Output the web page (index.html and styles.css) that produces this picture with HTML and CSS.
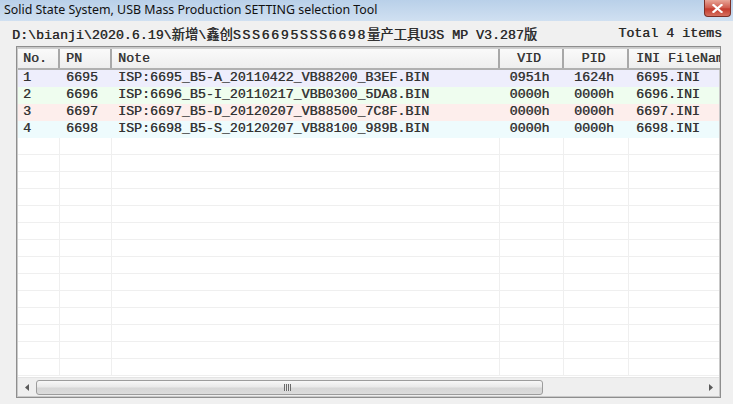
FILE: index.html
```html
<!DOCTYPE html>
<html>
<head>
<meta charset="utf-8">
<link rel="stylesheet" href="styles.css">
</head>
<body>
<div class="window">
  <div class="titlebar">
    <span class="title">Solid State System, USB Mass Production SETTING selection Tool</span>
    <div class="close"><svg width="11" height="9" viewBox="0 0 11 9"><path d="M1.5 1 L9.5 8 M9.5 1 L1.5 8" stroke="#fff" stroke-width="2.2" stroke-linecap="square"/></svg></div>
  </div>
  <div class="pathrow">
    <span class="path">D:\bianji\2020.6.19\新增\鑫创<span class="wide">SSS6695SSS6698</span>量产工具U3S MP V3.287版</span>
    <span class="total">Total 4 items</span>
  </div>
  <div class="listbox">
    <div class="header">
      <div class="hc">No.</div>
      <div class="hc">PN</div>
      <div class="hc">Note</div>
      <div class="hc center">VID</div>
      <div class="hc center">PID</div>
      <div class="hc ini">INI FileName</div>
    </div>
    <div class="rows">
      <div class="row r1"><div class="c">1</div><div class="c pn">6695</div><div class="c">ISP:6695_B5-A_20110422_VB88200_B3EF.BIN</div><div class="c center">0951h</div><div class="c center">1624h</div><div class="c ini">6695.INI</div></div>
      <div class="row r2"><div class="c">2</div><div class="c pn">6696</div><div class="c">ISP:6696_B5-I_20110217_VBB0300_5DA8.BIN</div><div class="c center">0000h</div><div class="c center">0000h</div><div class="c ini">6696.INI</div></div>
      <div class="row r3"><div class="c">3</div><div class="c pn">6697</div><div class="c">ISP:6697_B5-D_20120207_VB88500_7C8F.BIN</div><div class="c center">0000h</div><div class="c center">0000h</div><div class="c ini">6697.INI</div></div>
      <div class="row r4"><div class="c">4</div><div class="c pn">6698</div><div class="c">ISP:6698_B5-S_20120207_VB88100_989B.BIN</div><div class="c center">0000h</div><div class="c center">0000h</div><div class="c ini">6698.INI</div></div>
      <div class="row"><div class="c"></div><div class="c"></div><div class="c"></div><div class="c"></div><div class="c"></div><div class="c"></div></div>
      <div class="row"><div class="c"></div><div class="c"></div><div class="c"></div><div class="c"></div><div class="c"></div><div class="c"></div></div>
      <div class="row"><div class="c"></div><div class="c"></div><div class="c"></div><div class="c"></div><div class="c"></div><div class="c"></div></div>
      <div class="row"><div class="c"></div><div class="c"></div><div class="c"></div><div class="c"></div><div class="c"></div><div class="c"></div></div>
      <div class="row"><div class="c"></div><div class="c"></div><div class="c"></div><div class="c"></div><div class="c"></div><div class="c"></div></div>
      <div class="row"><div class="c"></div><div class="c"></div><div class="c"></div><div class="c"></div><div class="c"></div><div class="c"></div></div>
      <div class="row"><div class="c"></div><div class="c"></div><div class="c"></div><div class="c"></div><div class="c"></div><div class="c"></div></div>
      <div class="row"><div class="c"></div><div class="c"></div><div class="c"></div><div class="c"></div><div class="c"></div><div class="c"></div></div>
      <div class="row"><div class="c"></div><div class="c"></div><div class="c"></div><div class="c"></div><div class="c"></div><div class="c"></div></div>
      <div class="row"><div class="c"></div><div class="c"></div><div class="c"></div><div class="c"></div><div class="c"></div><div class="c"></div></div>
      <div class="row"><div class="c"></div><div class="c"></div><div class="c"></div><div class="c"></div><div class="c"></div><div class="c"></div></div>
      <div class="row"><div class="c"></div><div class="c"></div><div class="c"></div><div class="c"></div><div class="c"></div><div class="c"></div></div>
      <div class="row"><div class="c"></div><div class="c"></div><div class="c"></div><div class="c"></div><div class="c"></div><div class="c"></div></div>
      <div class="row"><div class="c"></div><div class="c"></div><div class="c"></div><div class="c"></div><div class="c"></div><div class="c"></div></div>
    </div>
    <div class="hscroll">
      <div class="sbtn"><svg width="4" height="7" viewBox="0 0 4 7"><path d="M4 0 L0 3.5 L4 7 Z" fill="#5a5a5a"/></svg></div>
      <div class="thumb"><div class="grip"></div></div>
      <div class="track"></div>
      <div class="sbtn"><svg width="4" height="7" viewBox="0 0 4 7"><path d="M0 0 L4 3.5 L0 7 Z" fill="#5a5a5a"/></svg></div>
    </div>
  </div>
</div>
</body>
</html>
```
FILE: styles.css
```css
html, body {
  margin: 0;
  padding: 0;
}
body {
  width: 733px;
  height: 404px;
  overflow: hidden;
  background: #f0f0f0;
}
.window {
  display: flex;
  flex-direction: column;
  height: 404px;
}
.titlebar {
  height: 21px;
  display: flex;
  align-items: flex-start;
  justify-content: space-between;
  background: linear-gradient(#b9d0e9, #d0e0f1);
  flex: none;
}
.title {
  font-family: "Noto Sans", "Open Sans", sans-serif;
  font-size: 12.4px;
  line-height: 19px;
  color: #111;
  padding-left: 4px;
}
.close {
  width: 27px;
  height: 17px;
  margin-right: 2px;
  box-sizing: border-box;
  border: 1px solid #7b2f27;
  border-top: none;
  border-radius: 0 0 4px 4px;
  background: linear-gradient(#e8a597, #cf5a4c 50%, #c43a2c 55%, #d5705f);
  display: flex;
  align-items: center;
  justify-content: center;
}
.pathrow {
  height: 25px;
  display: flex;
  align-items: center;
  justify-content: space-between;
  padding: 0 11px 0 12px;
  font-family: "Liberation Mono", "Noto Sans CJK SC", monospace;
  font-size: 13.3px;
  color: #2a2a2a;
  text-shadow: 0.4px 0 0 #444;
  flex: none;
}
.path, .total {
  white-space: nowrap;
}
.wide {
  letter-spacing: 1.6px;
}
.listbox {
  margin-left: 16px;
  width: 705px;
  height: 352px;
  box-sizing: border-box;
  border: 1px solid #8e8e8e;
  box-shadow: inset 0 0 0 1px #c9c9c9;
  padding: 1px;
  background: #fff;
  display: flex;
  flex-direction: column;
  overflow: hidden;
  flex: none;
  font-family: "Liberation Mono", "Noto Sans CJK SC", monospace;
  font-size: 13.3px;
  color: #333;
  text-shadow: 0.4px 0 0 #555;
}
.header, .row {
  display: grid;
  grid-template-columns: 42px 52px 388px 64px 65px 120px;
  width: 731px;
  flex: none;
}
.header {
  height: 22px;
  background: linear-gradient(#fafafa, #eeeeee);
  border-bottom: 2px solid #b0b0b0;
  box-sizing: border-box;
  border-top: 1px solid #d0d0d0;
}
.hc {
  border-right: 2px solid #a8a8a8;
  padding-left: 5px;
  line-height: 19px;
  white-space: nowrap;
  overflow: hidden;
}
.hc:nth-child(2), .hc:nth-child(3) {
  padding-left: 6px;
}
.rows {
  height: 307px;
  overflow: hidden;
  flex: none;
}
.row {
  height: 17px;
}
.c {
  border-right: 1px solid #efefef;
  border-bottom: 1px solid #efefef;
  line-height: 16px;
  padding-left: 5px;
  white-space: nowrap;
  overflow: hidden;
}
.c:nth-child(2), .c:nth-child(3) {
  padding-left: 6px;
}
.center {
  text-align: center;
  padding-left: 0 !important;
  padding-right: 4px;
}
.ini {
  padding-left: 7px;
}
.r1 { background: #eeeefc; }
.r2 { background: #effdef; }
.r3 { background: #fdeeec; }
.r4 { background: #eefbfd; }
.r1 .c, .r2 .c, .r3 .c, .r4 .c {
  border-right-color: transparent;
  border-bottom-color: transparent;
}
.hscroll {
  height: 18px;
  display: flex;
  align-items: center;
  background: #efefef;
  border-top: 1px solid #e4e4e4;
  flex: none;
  text-shadow: none;
}
.sbtn {
  width: 17px;
  height: 17px;
  display: flex;
  align-items: center;
  justify-content: center;
  flex: none;
}
.thumb {
  width: 507px;
  height: 15px;
  margin-left: 1px;
  box-sizing: border-box;
  border: 1px solid #9c9c9c;
  border-radius: 3px;
  background: linear-gradient(#f7f7f7, #e9e9e9 45%, #d6d6d6 55%, #dcdcdc);
  display: flex;
  align-items: center;
  justify-content: center;
  flex: none;
}
.grip {
  width: 7px;
  height: 7px;
  background: repeating-linear-gradient(90deg, #6a6a6a 0 1px, #e6e6e6 1px 2px);
  margin-left: -4px;
}
.track {
  flex: 1;
}
```
